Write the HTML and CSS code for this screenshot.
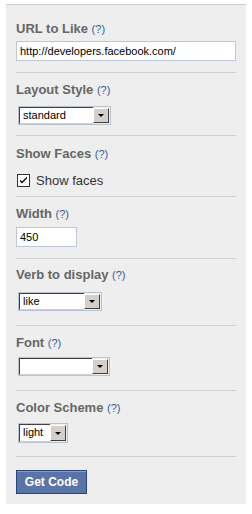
FILE: index.html
```html
<!DOCTYPE html>
<html>
<head>
<meta charset="utf-8">
<link rel="stylesheet" href="styles.css">
</head>
<body>
<div class="panel">
  <div class="section s1">
    <div class="label">URL to Like <span class="help">(?)</span></div>
    <div class="textbox wide">http://developers.facebook.com/</div>
  </div>
  <div class="section s2">
    <div class="label">Layout Style <span class="help">(?)</span></div>
    <div class="select w-layout"><span class="val">standard</span><span class="arrow"><i></i></span></div>
  </div>
  <div class="section s3">
    <div class="label">Show Faces <span class="help">(?)</span></div>
    <div class="check-row">
      <svg class="checkbox" width="13" height="13" viewBox="0 0 13 13">
        <rect x="0.5" y="0.5" width="12" height="12" fill="#fff" stroke="#333"/>
        <path d="M3 5.5 L5 7.5 L10 2.5 L10 4.5 L5 9.5 L3 7.5 Z" fill="#111"/>
      </svg>
      <span>Show faces</span>
    </div>
  </div>
  <div class="section s4">
    <div class="label">Width <span class="help">(?)</span></div>
    <div class="textbox narrow">450</div>
  </div>
  <div class="section s5">
    <div class="label">Verb to display <span class="help">(?)</span></div>
    <div class="select w-verb"><span class="val">like</span><span class="arrow"><i></i></span></div>
  </div>
  <div class="section s6">
    <div class="label">Font <span class="help">(?)</span></div>
    <div class="select w-font"><span class="val"></span><span class="arrow"><i></i></span></div>
  </div>
  <div class="section s7">
    <div class="label">Color Scheme <span class="help">(?)</span></div>
    <div class="select w-color"><span class="val">light</span><span class="arrow"><i></i></span></div>
  </div>
  <div class="section last">
    <button class="btn">Get Code</button>
  </div>
</div>
</body>
</html>
```

FILE: styles.css
```css
html, body {
  margin: 0;
  padding: 0;
  background: #fff;
}
body {
  padding: 4px 6px 0 6px;
  font-family: "Liberation Sans", Arial, sans-serif;
}
.panel {
  width: 240px;
  height: 500px;
  box-sizing: border-box;
  background: #eeeeee;
  border-top: 1px solid #cccccc;
  padding: 0 10px;
}
.section {
  border-bottom: 1px solid #d0d0d0;
}
.s1 { padding: 16px 0 11px 0; }
.s2 { padding: 9px 0 10px 0; }
.s3 { padding: 10px 0 9px 0; }
.s4 { padding: 9px 0 11px 0; }
.s5 { padding: 8px 0 14px 0; }
.s6 { padding: 9px 0 14px 0; }
.s7 { padding: 9px 0 13px 0; }
.section.last {
  border-bottom: none;
  padding-top: 13px;
}
.label {
  font-size: 13px;
  font-weight: bold;
  color: #666666;
  line-height: 16px;
  height: 16px;
  white-space: nowrap;
}
.help {
  font-weight: normal;
  font-size: 11px;
  color: #3b5998;
}
.textbox {
  margin-top: 4px;
  height: 20px;
  box-sizing: border-box;
  border: 1px solid #bdc7d8;
  background: #fff;
  font-size: 11px;
  color: #000;
  line-height: 18px;
  padding-left: 3px;
}
.textbox.wide { width: 220px; }
.textbox.narrow { width: 61px; margin-top: 5px; }
.select {
  margin-left: 2px;
  height: 19px;
  box-sizing: border-box;
  border: 1px solid #b9c3cf;
  display: flex;
}
.s2 .select { margin-top: 8px; }
.s5 .select { margin-top: 9px; }
.s6 .select { margin-top: 6px; }
.s7 .select { margin-top: 7px; height: 20px; }
.select .val {
  flex: 1;
  background: #fff;
  border-top: 1px solid #404040;
  border-left: 1px solid #404040;
  border-bottom: 1px solid #d4d0c8;
  font-size: 11px;
  line-height: 15px;
  padding-left: 3px;
  color: #000;
}
.select .arrow {
  width: 16px;
  box-sizing: border-box;
  background: #d4d0c8;
  border-top: 1px solid #fff;
  border-left: 1px solid #fff;
  border-right: 1px solid #404040;
  border-bottom: 1px solid #404040;
  display: flex;
  align-items: center;
  justify-content: center;
  margin: 1px 1px 1px 0;
}
.select .arrow i {
  width: 0;
  height: 0;
  border-left: 3px solid transparent;
  border-right: 3px solid transparent;
  border-top: 3px solid #000;
}
.w-layout { width: 93px; }
.w-verb { width: 84px; }
.w-font { width: 92px; }
.w-color { width: 50px; }
.check-row {
  margin-top: 12px;
  display: flex;
  align-items: center;
  font-size: 13px;
  color: #333;
  height: 13px;
}
.checkbox {
  margin-left: 1px;
  margin-right: 6px;
}
.btn {
  display: block;
  width: 71px;
  height: 24px;
  background: #5b74a8;
  border: 1px solid #29447e;
  box-shadow: inset 0 1px 0 #8a9cc2;
  color: #fff;
  font-family: "Liberation Sans", Arial, sans-serif;
  font-weight: bold;
  font-size: 12px;
  padding: 0;
  margin: 0;
}
```
